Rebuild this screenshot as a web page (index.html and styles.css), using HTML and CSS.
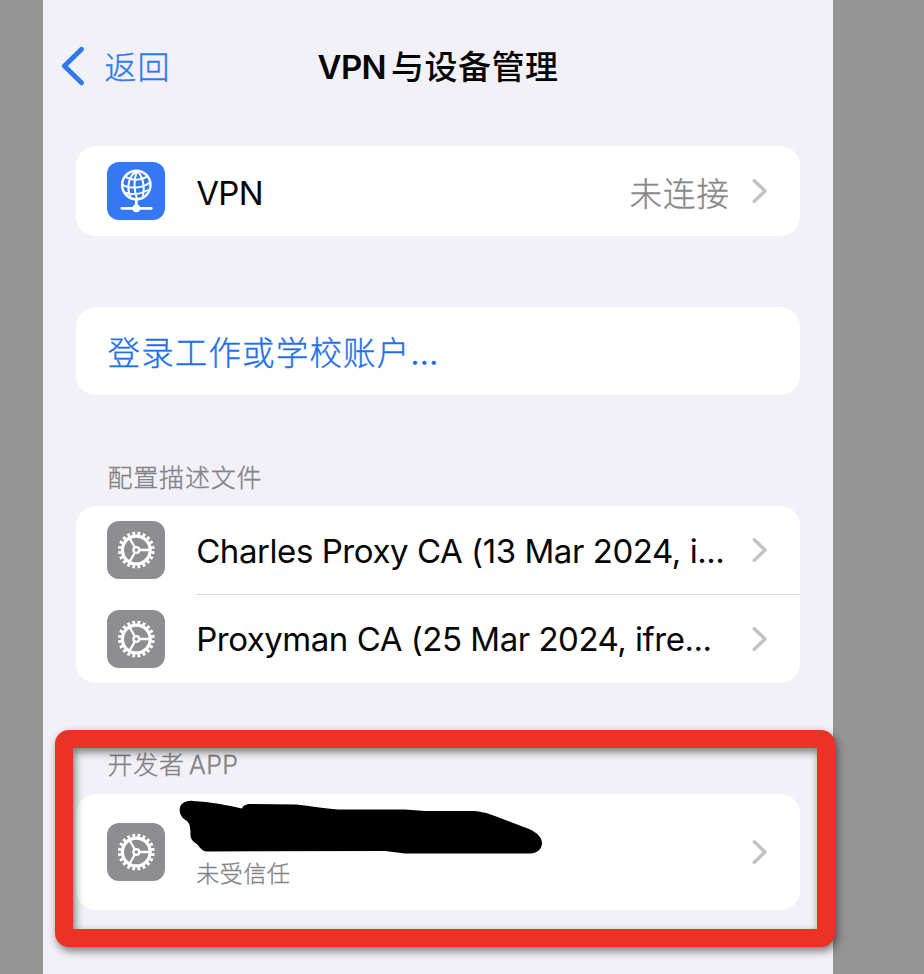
FILE: index.html
```html
<!DOCTYPE html>
<html lang="zh-CN">
<head>
<meta charset="utf-8">
<title>VPN与设备管理</title>
<link rel="stylesheet" href="styles.css">
</head>
<body>
<svg class="defs" width="0" height="0" aria-hidden="true">
  <symbol id="gear" viewBox="0 0 58 58">
    <g fill="none" stroke="#fff">
      <circle cx="29.300" cy="29" r="16.500" stroke-width="3.800" pathLength="40" stroke-dasharray="1.100 0.900" stroke-dashoffset="-0.450"/>
      <circle cx="29.300" cy="29" r="13.900" stroke-width="3.200"/>
      <circle cx="29.300" cy="29" r="2.900" stroke-width="2.300"/>
      <path stroke-width="2.300" d="M32.800 29H43.300M27.600 26 22.300 16.800M27.600 32 22.300 41.200"/>
    </g>
  </symbol>
  <symbol id="chevron" viewBox="0 0 16 26">
    <path d="M2.3 2.8 13 13 2.3 23.2" fill="none" stroke="#c4c4c6" stroke-width="3.600" stroke-linecap="round" stroke-linejoin="round"/>
  </symbol>
</svg>
<main class="phone">
  <header class="nav">
    <a class="back">
      <svg class="back-icon" width="24" height="40" viewBox="0 0 24 40"><path d="M20.500 3.2 3.400 20 20.500 36.8" fill="none" stroke="#2f78f0" stroke-width="4.8" stroke-linecap="round" stroke-linejoin="round"/></svg>
      <span class="back-text">返回</span>
    </a>
    <h1 class="title"><span class="title-latin">VPN</span>与设备管理</h1>
  </header>

  <section class="card card-vpn">
    <div class="row">
      <span class="tile tile-blue">
        <svg width="58" height="58" viewBox="0 0 58 58" fill="none" stroke="#fff" stroke-linecap="round">
          <circle cx="29.300" cy="23" r="14.2" stroke-width="2.400"/>
          <path stroke-width="2" d="M30 9C22 13 19 25 23.500 35M30 9C27 17 27 28 30 37M30 9C36 14 38 25 36 34M18 14.500C25 19 34 18.500 40 14.500M15 22.500C23 27.500 36 26 43 20.500M17 30.500C25 33 34 32 41 28"/>
          <path stroke-width="2.800" d="M29.300 38v7M14.800 46.300H44.300"/>
          <circle cx="29.300" cy="46.300" r="3.900" fill="#fff" stroke="none"/>
        </svg>
      </span>
      <span class="label label-vpn">VPN</span>
      <span class="value">未连接</span>
      <svg class="chevron"><use href="#chevron"/></svg>
    </div>
  </section>

  <section class="card card-login"><a class="link">登录工作或学校账户<span class="dots">…</span></a></section>

  <h2 class="heading">配置描述文件</h2>
  <section class="card card-profiles">
    <div class="row">
      <span class="tile"><svg width="58" height="58"><use href="#gear"/></svg></span>
      <span class="label label-charles">Charles Proxy CA (13 Mar 2024, i...</span>
      <svg class="chevron"><use href="#chevron"/></svg>
    </div>
    <div class="row row-divided">
      <span class="tile"><svg width="58" height="58"><use href="#gear"/></svg></span>
      <span class="label label-proxyman">Proxyman CA (25 Mar 2024, ifre...</span>
      <svg class="chevron"><use href="#chevron"/></svg>
    </div>
  </section>

  <h2 class="heading heading-dev">开发者<span class="heading-latin">APP</span></h2>
  <section class="card card-dev">
    <div class="row">
      <span class="tile"><svg width="58" height="58"><use href="#gear"/></svg></span>
      <span class="status">未受信任</span>
      <svg class="chevron"><use href="#chevron"/></svg>
    </div>
    <svg class="scribble" width="364" height="56" viewBox="179 799 364 56">
      <path d="M180 813C178 805 184 800 193 801C210 802 227 805 242 808.500C243 805 247 803.500 253 804L296 804.500C311 806 324 808.500 338 809.500H405L425 811H470C480 811 487 813 495 816L529 829C538 833 542 838 542 843C542 849 537 853.500 530 853.500H405L385 851L207 851.500C202 851 200 848 197 844C192 841 190 838 190.500 832C190 827 190 824 187 821C183 819 181 816 180 813Z"/>
    </svg>
  </section>
</main>
<div class="highlight"></div>
</body>
</html>
```

FILE: styles.css
```css
* { box-sizing: border-box; }

body {
  margin: 0;
  height: 974px;
  overflow: hidden;
  position: relative;
  background: #959595;
  color: #050505;
  font-family: Inter, "Noto Sans CJK SC", sans-serif;
}

.defs { position: absolute; }

.phone {
  width: 789.500px;
  height: 974px;
  margin-left: 43px;
  padding: 0 32.500px 0 32.500px;
  background: #f2f1f7;
}

.nav {
  height: 146px;
  display: grid;
  grid-template-columns: 242px 1fr;
  align-items: start;
  padding-top: 42px;
}

.back {
  display: flex;
  align-items: center;
  gap: 20px;
  height: 48px;
  margin-left: -15px;
  color: #2f78f0;
  font-size: 32px;
  font-weight: 300;
  letter-spacing: 1px;
}

.back-text { padding-bottom: 2px; }

.back-text,
.value,
.link,
.heading,
.status { -webkit-text-stroke: 0.350px currentColor; }

.title {
  margin: 0;
  padding-top: 1px;
  font-size: 33px;
  line-height: 48px;
  font-weight: 500;
  letter-spacing: 0.500px;
  white-space: nowrap;
}

.title-latin { font-weight: 580; letter-spacing: -0.600px; margin-right: 5px; }

.card {
  position: relative;
  background: #fff;
  border-radius: 20px;
}

.card-vpn { height: 90px; }
.card-login { height: 87.500px; margin-top: 71px; padding-left: 32px; }
.card-profiles { height: 177px; }
.card-dev { height: 116.500px; }

.row {
  height: 88.500px;
  display: flex;
  align-items: center;
  padding: 0 32px;
  position: relative;
}

.card-vpn .row { height: 90px; }
.card-dev .row { height: 116px; }

.row-divided::before {
  content: "";
  position: absolute;
  top: -1px;
  left: 120.500px;
  right: 0;
  height: 1px;
  background: #d9d9dc;
}

.tile {
  width: 58px;
  height: 58px;
  border-radius: 12px;
  background: #8e8d92;
  flex: none;
  margin-left: -0.300px;
  margin-right: 31px;
}

.tile svg { display: block; }
.tile-blue { background: #3478f6; }

.label {
  flex: 1;
  white-space: nowrap;
  font-size: 33px;
  font-weight: 380;
  line-height: 48px;
}

.label-vpn { letter-spacing: -0.600px; padding-top: 3px; }
.label-charles { letter-spacing: -0.440px; padding-top: 1px; }
.label-proxyman { letter-spacing: -0.480px; padding-top: 1px; }

.value {
  color: #88888b;
  font-size: 32.500px;
  font-weight: 300;
  letter-spacing: 1px;
  margin-right: 22px;
}

.chevron { width: 16px; height: 26px; flex: none; }

.link {
  display: block;
  padding-top: 1px;
  line-height: 91px;
  color: #1f6fec;
  font-size: 32.500px;
  font-weight: 300;
  letter-spacing: 1.150px;
}

.dots { font-weight: 400; -webkit-text-stroke: 0; }

.heading {
  margin: 66px 0 0 32px;
  height: 45.500px;
  color: #838388;
  font-size: 25px;
  line-height: 34px;
  font-weight: 300;
  letter-spacing: 0.800px;
}

.heading-dev { margin-top: 65px; }
.heading-latin { margin-left: 4px; font-size: 25px; letter-spacing: 0.400px; }

.status {
  flex: 1;
  align-self: flex-end;
  margin-bottom: 19px;
  color: #838388;
  font-size: 23px;
  font-weight: 300;
  line-height: 34px;
  letter-spacing: 0.600px;
}

.scribble { position: absolute; left: 103.500px; top: 5px; }

.highlight {
  position: absolute;
  left: 55px;
  top: 730px;
  width: 780px;
  height: 217px;
  border: 18px solid #ea3324;
  border-radius: 14px;
  filter: drop-shadow(2px 4px 4px rgba(0, 0, 0, 0.5));
}
```
